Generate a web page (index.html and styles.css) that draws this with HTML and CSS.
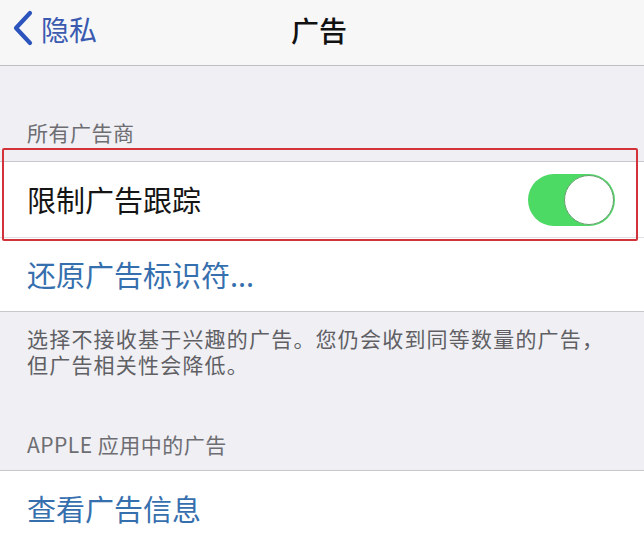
FILE: index.html
```html
<!DOCTYPE html>
<html lang="zh-CN">
<head>
<meta charset="utf-8">
<title>广告</title>
<link rel="stylesheet" href="styles.css">
</head>
<body>
<div class="screen">
  <header class="nav">
    <div class="back">
      <svg class="chevron" width="22" height="36" viewBox="0 0 22 36" aria-hidden="true">
        <path d="M18 3 L4 18 L18 33" fill="none" stroke="#2b55bd" stroke-width="4.2" stroke-linecap="round" stroke-linejoin="round"/>
      </svg>
      <span class="back-label">隐私</span>
    </div>
    <div class="nav-title">广告</div>
  </header>

  <div class="group-header first">所有广告商</div>
  <div class="group">
    <div class="row">
      <span class="row-label">限制广告跟踪</span>
      <div class="switch on"><div class="knob"></div></div>
    </div>
    <div class="row row-link">
      <span class="row-label link">还原广告标识符...</span>
    </div>
  </div>
  <div class="group-footer">选择不接收基于兴趣的广告。您仍会收到同等数量的广告，但广告相关性会降低。</div>

  <div class="group-header second">APPLE 应用中的广告</div>
  <div class="group">
    <div class="row row-last">
      <span class="row-label link">查看广告信息</span>
    </div>
  </div>

  <div class="highlight"></div>
</div>
</body>
</html>
```

FILE: styles.css
```css
* { box-sizing: border-box; }

html, body {
  margin: 0;
  padding: 0;
  background: #efeff4;
}

body {
  font-family: "Noto Sans CJK SC", "Noto Sans", "Liberation Sans", sans-serif;
  color: #111;
}

.screen {
  position: relative;
  width: 644px;
  height: 541px;
  overflow: hidden;
  background: #efeff4;
}

.nav {
  position: relative;
  height: 66px;
  background: #f7f7f8;
  border-bottom: 1px solid #bdbdc2;
  display: flex;
  align-items: center;
  justify-content: center;
}

.back {
  position: absolute;
  left: 12px;
  top: 10px;
  display: flex;
  align-items: center;
  gap: 7px;
}

.chevron { display: block; }

.back-label {
  font-size: 28px;
  line-height: 1;
  color: #3a5ab0;
  padding-top: 2px;
}

.nav-title {
  font-size: 28px;
  font-weight: 500;
  line-height: 1;
  color: #111;
  margin-left: -6px;
  padding-bottom: 6px;
}

.group-header {
  font-size: 21px;
  line-height: 26px;
  letter-spacing: 0.5px;
  color: #6d6d72;
  padding: 0 27px;
}

.group-header.first {
  padding-top: 53px;
  padding-bottom: 16px;
}

.group-header.second {
  padding-top: 54px;
  padding-bottom: 13px;
}

.group {
  background: #fff;
  border-top: 1px solid #c8c7cc;
  border-bottom: 1px solid #c8c7cc;
}

.row {
  display: flex;
  align-items: center;
  justify-content: space-between;
  height: 76px;
  padding: 0 29px 0 27px;
  border-bottom: 1px solid #e0e0e4;
}

.row-link {
  height: 73px;
  border-bottom: none;
}

.row-last {
  height: 74px;
  border-bottom: none;
}

.row-label {
  font-size: 29px;
  line-height: 1;
  color: #151515;
}

.row-label.link {
  color: #366fae;
}

.switch {
  width: 87px;
  height: 52px;
  border-radius: 26px;
  background: #4cd964;
  display: flex;
  align-items: center;
  justify-content: flex-end;
  padding: 1px;
}

.knob {
  width: 50px;
  height: 50px;
  border-radius: 50%;
  background: #fff;
  border: 1.5px solid #6b9f72;
}

.group-footer {
  font-size: 21px;
  line-height: 26px;
  letter-spacing: 1.2px;
  color: #5f5f64;
  padding: 13px 30px 0 27px;
}

.highlight {
  position: absolute;
  left: 2px;
  top: 148px;
  width: 636px;
  height: 93px;
  border: 2px solid #d2323a;
  border-radius: 2px;
  pointer-events: none;
}
```
